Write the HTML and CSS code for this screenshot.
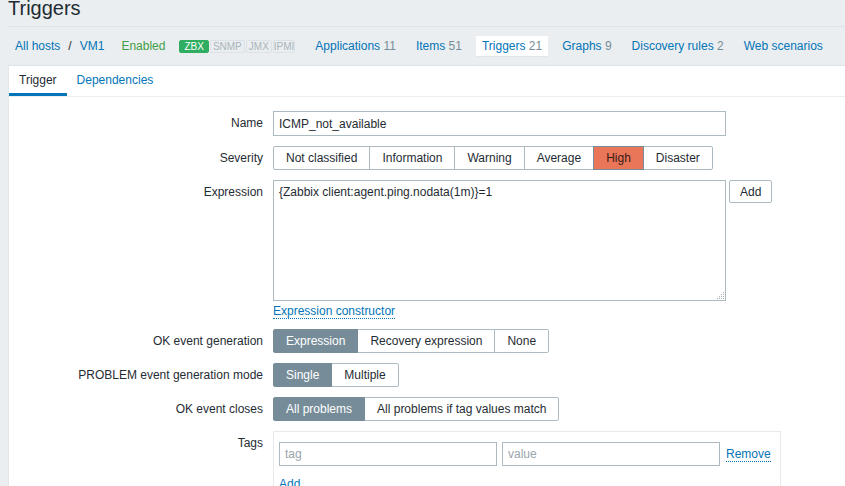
FILE: index.html
```html
<!DOCTYPE html>
<html lang="en">
<head>
<meta charset="utf-8">
<title>Triggers</title>
<link rel="stylesheet" href="styles.css">
</head>
<body>
<div class="page">
  <header class="title-bar"><h1 class="title">Triggers</h1></header>
  <nav class="host-nav">
    <div class="crumbs"><a class="link">All hosts</a><span class="sep">/</span><a class="link">VM1</a></div>
    <span class="status-enabled">Enabled</span>
    <div class="badges"><span class="badge badge-on">ZBX</span><span class="badge">SNMP</span><span class="badge">JMX</span><span class="badge badge-tight">IPMI</span></div>
    <ul class="host-tabs">
      <li class="host-tab"><a class="link">Applications</a> <span class="count">11</span></li>
      <li class="host-tab"><a class="link">Items</a> <span class="count">51</span></li>
      <li class="host-tab"><span class="host-tab-selected"><a class="link">Triggers</a> <span class="count">21</span></span></li>
      <li class="host-tab"><a class="link">Graphs</a> <span class="count">9</span></li>
      <li class="host-tab"><a class="link">Discovery rules</a> <span class="count">2</span></li>
      <li class="host-tab"><a class="link">Web scenarios</a></li>
    </ul>
  </nav>
  <main class="panel">
    <ul class="tabs">
      <li class="tab tab-active">Trigger</li>
      <li class="tab"><a class="link">Dependencies</a></li>
    </ul>
    <form class="form">
      <label class="form-label">Name</label>
      <div class="form-field"><input class="text-input name-input" type="text" value="ICMP_not_available"></div>

      <label class="form-label">Severity</label>
      <div class="form-field">
        <div class="segmented">
          <span class="seg">Not classified</span>
          <span class="seg">Information</span>
          <span class="seg">Warning</span>
          <span class="seg">Average</span>
          <span class="seg seg-high">High</span>
          <span class="seg">Disaster</span>
        </div>
      </div>

      <label class="form-label">Expression</label>
      <div class="form-field">
        <div class="expr-row">
          <div class="textarea-wrap">
            <textarea class="expr-input">{Zabbix client:agent.ping.nodata(1m)}=1</textarea>
            <svg class="grip" width="9" height="9" viewBox="0 0 9 9"><g fill="#a9b3b8"><rect x="8" y="2" width="1" height="1"/><rect x="6" y="4" width="1" height="1"/><rect x="8" y="4" width="1" height="1"/><rect x="4" y="6" width="1" height="1"/><rect x="6" y="6" width="1" height="1"/><rect x="8" y="6" width="1" height="1"/><rect x="2" y="8" width="1" height="1"/><rect x="4" y="8" width="1" height="1"/><rect x="6" y="8" width="1" height="1"/><rect x="8" y="8" width="1" height="1"/></g></svg>
          </div>
          <button class="btn" type="button">Add</button>
        </div>
        <div class="constructor-row"><a class="link dotted">Expression constructor</a></div>
      </div>

      <label class="form-label">OK event generation</label>
      <div class="form-field">
        <div class="segmented">
          <span class="seg seg-on">Expression</span>
          <span class="seg">Recovery expression</span>
          <span class="seg">None</span>
        </div>
      </div>

      <label class="form-label">PROBLEM event generation mode</label>
      <div class="form-field">
        <div class="segmented">
          <span class="seg seg-on">Single</span>
          <span class="seg">Multiple</span>
        </div>
      </div>

      <label class="form-label">OK event closes</label>
      <div class="form-field">
        <div class="segmented">
          <span class="seg seg-on">All problems</span>
          <span class="seg">All problems if tag values match</span>
        </div>
      </div>

      <label class="form-label">Tags</label>
      <div class="form-field">
        <div class="tags-box">
          <div class="tag-row">
            <input class="text-input tag-input" type="text" placeholder="tag">
            <input class="text-input tag-input" type="text" placeholder="value">
            <a class="link dotted">Remove</a>
          </div>
          <div class="tag-add"><a class="link">Add</a></div>
        </div>
      </div>
    </form>
  </main>
</div>
</body>
</html>
```

FILE: styles.css
```css
html, body {
  margin: 0;
  padding: 0;
  overflow: hidden;
  height: 100%;
}
body {
  background: #ebeef0;
  font-family: "Liberation Sans", Arial, sans-serif;
  font-size: 12px;
  color: #1f2c33;
}
.page {
  padding-left: 8px;
}
.link {
  color: #0275b8;
  text-decoration: none;
  cursor: pointer;
}
.dotted {
  border-bottom: 1px dotted #0275b8;
}

/* title */
.title-bar {
  height: 26px;
  border-bottom: 1px solid #dde3e6;
  overflow: hidden;
}
.title {
  margin: -4px 0 0 0;
  font-size: 20px;
  font-weight: normal;
  line-height: 24px;
  color: #1f2c33;
}

/* host navigation */
.host-nav {
  height: 38px;
  display: flex;
  align-items: center;
  padding-left: 7px;
  white-space: nowrap;
}
.crumbs {
  display: flex;
  align-items: center;
  gap: 8px;
}
.sep {
  color: #1f2c33;
}
.status-enabled {
  color: #429e47;
  margin-left: 17px;
}
.badges {
  display: flex;
  gap: 1px;
  margin-left: 14px;
}
.badge {
  font-size: 10px;
  line-height: 11px;
  padding: 0 2px;
  border: 1px solid #dce2e5;
  background: #ebeef0;
  color: #a8b5bb;
  border-radius: 2px;
}
.badge-tight {
  padding: 0;
}
.badge-on {
  background: #2fae61;
  border-color: #2fae61;
  color: #ffffff;
  padding: 0 4px;
}
.host-tabs {
  list-style: none;
  margin: 0 0 0 10px;
  padding: 0;
  display: flex;
  align-items: center;
}
.host-tab {
  padding: 0 10px;
}
.count {
  color: #768d99;
}
.host-tab-selected {
  display: inline-block;
  background: #ffffff;
  line-height: 20px;
  padding: 0 6px;
  margin: 0 -6px;
  box-shadow: 0 1px 0 #e1e6e9;
}

/* panel */
.panel {
  background: #ffffff;
  border-top: 1px solid #dde3e6;
  border-left: 1px solid #e3e8ea;
  min-height: 500px;
}
.tabs {
  list-style: none;
  margin: 0;
  padding: 0;
  display: flex;
  border-bottom: 1px solid #ebeef0;
}
.tab {
  padding: 6px 10px 5px;
  line-height: 16px;
  border-bottom: 3px solid transparent;
}
.tab-active {
  border-bottom-color: #0275b8;
  color: #1f2c33;
}

/* form */
.form {
  display: grid;
  grid-template-columns: 254px 1fr;
  column-gap: 10px;
  row-gap: 10px;
  padding-top: 14px;
}
.form-label {
  text-align: right;
  line-height: 24px;
  white-space: nowrap;
}
.form-field {
  min-width: 0;
}
.text-input {
  box-sizing: border-box;
  height: 24px;
  border: 1px solid #acbbc2;
  padding: 0 5px;
  font-family: "Liberation Sans", Arial, sans-serif;
  font-size: 12px;
  color: #1f2c33;
  background: #ffffff;
  outline: none;
  margin: 0;
}
.text-input::placeholder {
  color: #9aa5ab;
}
.name-input {
  width: 453px;
  height: 25px;
  display: block;
}
.segmented {
  display: flex;
}
.seg {
  box-sizing: border-box;
  height: 24px;
  line-height: 22px;
  padding: 0 12px;
  border: 1px solid #acbbc2;
  margin-left: -1px;
  background: #ffffff;
  color: #1f2c33;
  white-space: nowrap;
}
.seg:first-child {
  margin-left: 0;
  border-radius: 2px 0 0 2px;
}
.seg:last-child {
  border-radius: 0 2px 2px 0;
}
.seg-on {
  background: #768d99;
  border-color: #768d99;
  color: #ffffff;
  position: relative;
}
.seg-high {
  background: #e97659;
  border-color: #768d99;
  color: #3a1c14;
  position: relative;
}
.expr-row {
  display: flex;
  align-items: flex-start;
  gap: 3px;
}
.textarea-wrap {
  position: relative;
  width: 453px;
  height: 121px;
}
.expr-input {
  box-sizing: border-box;
  display: block;
  width: 453px;
  height: 121px;
  margin: 0;
  border: 1px solid #acbbc2;
  padding: 4px 5px;
  font-family: "Liberation Sans", Arial, sans-serif;
  font-size: 12px;
  line-height: 14px;
  color: #1f2c33;
  resize: none;
  outline: none;
}
.grip {
  position: absolute;
  right: 2px;
  bottom: 2px;
}
.btn {
  box-sizing: border-box;
  height: 23px;
  padding: 0 10px;
  border: 1px solid #acbbc2;
  border-radius: 2px;
  background: #ffffff;
  font-family: "Liberation Sans", Arial, sans-serif;
  font-size: 12px;
  color: #1f2c33;
  margin: 0;
}
.constructor-row {
  height: 18px;
  line-height: 20px;
}
.tags-box {
  box-sizing: border-box;
  width: 508px;
  border: 1px solid #e6eaec;
  padding: 10px 9px 0 5px;
}
.tag-row {
  display: flex;
  align-items: center;
}
.tag-input {
  width: 218px;
}
.tag-input + .tag-input {
  margin-left: 5px;
}
.tag-row .link {
  margin-left: 6px;
}
.tag-add {
  line-height: 24px;
  padding-top: 6px;
}
```
